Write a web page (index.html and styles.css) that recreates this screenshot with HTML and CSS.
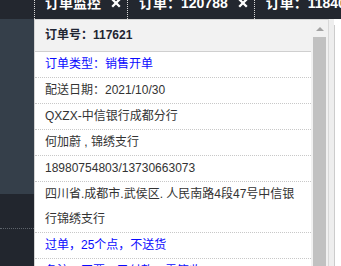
FILE: index.html
```html
<!DOCTYPE html>
<html lang="zh-CN">

<head>
    <meta charset="UTF-8">
    <meta name="viewport" content="width=device-width, initial-scale=1.0">
    <title>订单监控</title>
    <link rel="stylesheet" href="styles.css">
</head>

<body>

    <div class="app">
        <header class="tabbar">
            <div class="tab-lead"></div>
            <div class="tab">
                <span class="tab-label">订单监控</span>
                <svg class="tab-close" viewBox="0 0 10 10" width="10" height="10"><path d="M1.2 1.2 8.8 8.8M8.8 1.2 1.2 8.8" /></svg>
            </div>
            <div class="tab">
                <span class="tab-label">订单：120788</span>
                <svg class="tab-close" viewBox="0 0 10 10" width="10" height="10"><path d="M1.2 1.2 8.8 8.8M8.8 1.2 1.2 8.8" /></svg>
            </div>
            <div class="tab">
                <span class="tab-label">订单：118405</span>
            </div>
        </header>

        <div class="main">
            <aside class="side">
                <div class="side-top"></div>
                <div class="side-bottom"></div>
            </aside>

            <section class="popup">
                <div class="popup-scroll">
                    <div class="popup-head">订单号：117621</div>
                    <ul class="rows">
                        <li class="row blue">订单类型：销售开单</li>
                        <li class="row">配送日期：2021/10/30</li>
                        <li class="row">QXZX-中信银行成都分行</li>
                        <li class="row">何加蔚 , 锦绣支行</li>
                        <li class="row">18980754803/13730663073</li>
                        <li class="row">四川省.成都市.武侯区. 人民南路4段47号中信银行锦绣支行</li>
                        <li class="row blue">过单，25个点，不送货</li>
                        <li class="row blue">备注：开票，已付款，需签收</li>
                    </ul>
                </div>
                <div class="scrollbar">
                    <span class="scroll-arrow"></span>
                    <span class="scroll-thumb"></span>
                </div>
            </section>

            <div class="gutter"></div>
            <div class="backpane"></div>
        </div>
    </div>

</body>

</html>
```

FILE: styles.css
```css
* {
    box-sizing: border-box;
}

body {
    margin: 0;
    width: 341px;
    height: 266px;
    overflow: hidden;
    font-family: "Liberation Sans", "Noto Sans CJK SC", sans-serif;
    background: #ffffff;
}

.app {
    display: flex;
    flex-direction: column;
    height: 266px;
}

/* 顶部标签栏 */
.tabbar {
    display: flex;
    height: 19px;
    flex: none;
    overflow: hidden;
    background-color: #23272f;
    color: #ffffff;
}

.tab-lead {
    width: 34px;
    flex: none;
}

.tab {
    display: flex;
    align-items: flex-start;
    flex: none;
    padding: 0 6px 0 10px;
    border-left: 1px dotted #d8d8d8;
    height: 19px;
    white-space: nowrap;
}

.tab+.tab {
    padding-left: 11px;
}

.tab-label {
    font-size: 14px;
    font-weight: bold;
    line-height: 14px;
    margin-top: -4px;
}

.tab-close {
    margin: -2px 0 0 10px;
    stroke: #ffffff;
    stroke-width: 2.3;
    fill: none;
}

.main {
    display: flex;
    flex: 1;
    min-height: 0;
}

/* 左侧栏 */
.side {
    width: 34px;
    flex: none;
    display: flex;
    flex-direction: column;
}

.side-top {
    height: 175px;
    background-color: #353f4a;
}

.side-bottom {
    flex: 1;
    background-color: #22262e;
    padding-top: 34px;
}

.side-bottom::before {
    content: "";
    display: block;
    border-top: 1px dotted #5d636b;
}

/* 订单弹窗 */
.popup {
    display: flex;
    width: 294px;
    flex: none;
    border-left: 1px solid #d4d4d4;
    border-top: 1px solid #d6d6d6;
    overflow: hidden;
}

.popup-scroll {
    flex: 1;
    background-color: #ffffff;
}

.popup-head {
    height: 32px;
    line-height: 31px;
    padding: 0 10px;
    font-size: 12px;
    font-weight: bold;
    color: #1f2533;
    background-color: #f2f2f2;
    border-bottom: 1px solid #cfcfcf;
}

.rows {
    list-style: none;
    margin: 0;
    padding: 0;
}

.row {
    padding: 0 10px;
    font-size: 12px;
    line-height: 25px;
    color: #333333;
    border-bottom: 1px dotted #c8c8c8;
}

.row.blue {
    color: #0a0aff;
}

/* 滚动条 */
.scrollbar {
    width: 17px;
    flex: none;
    display: flex;
    flex-direction: column;
    align-items: center;
    background-color: #f1f1f1;
    padding-top: 7px;
}

.scroll-arrow {
    width: 0;
    height: 0;
    border-left: 4px solid transparent;
    border-right: 4px solid transparent;
    border-bottom: 4px solid #a3a3a3;
}

.scroll-thumb {
    width: 13px;
    flex: 1;
    margin-top: 6px;
    background-color: #c1c1c1;
}

.gutter {
    width: 6px;
    flex: none;
    background-color: #eeeeee;
    border-left: 1px solid #d8d8d8;
}

.backpane {
    flex: 1;
    margin-top: 6px;
    background-color: #ffffff;
    border-left: 1px solid #cccccc;
}
```
